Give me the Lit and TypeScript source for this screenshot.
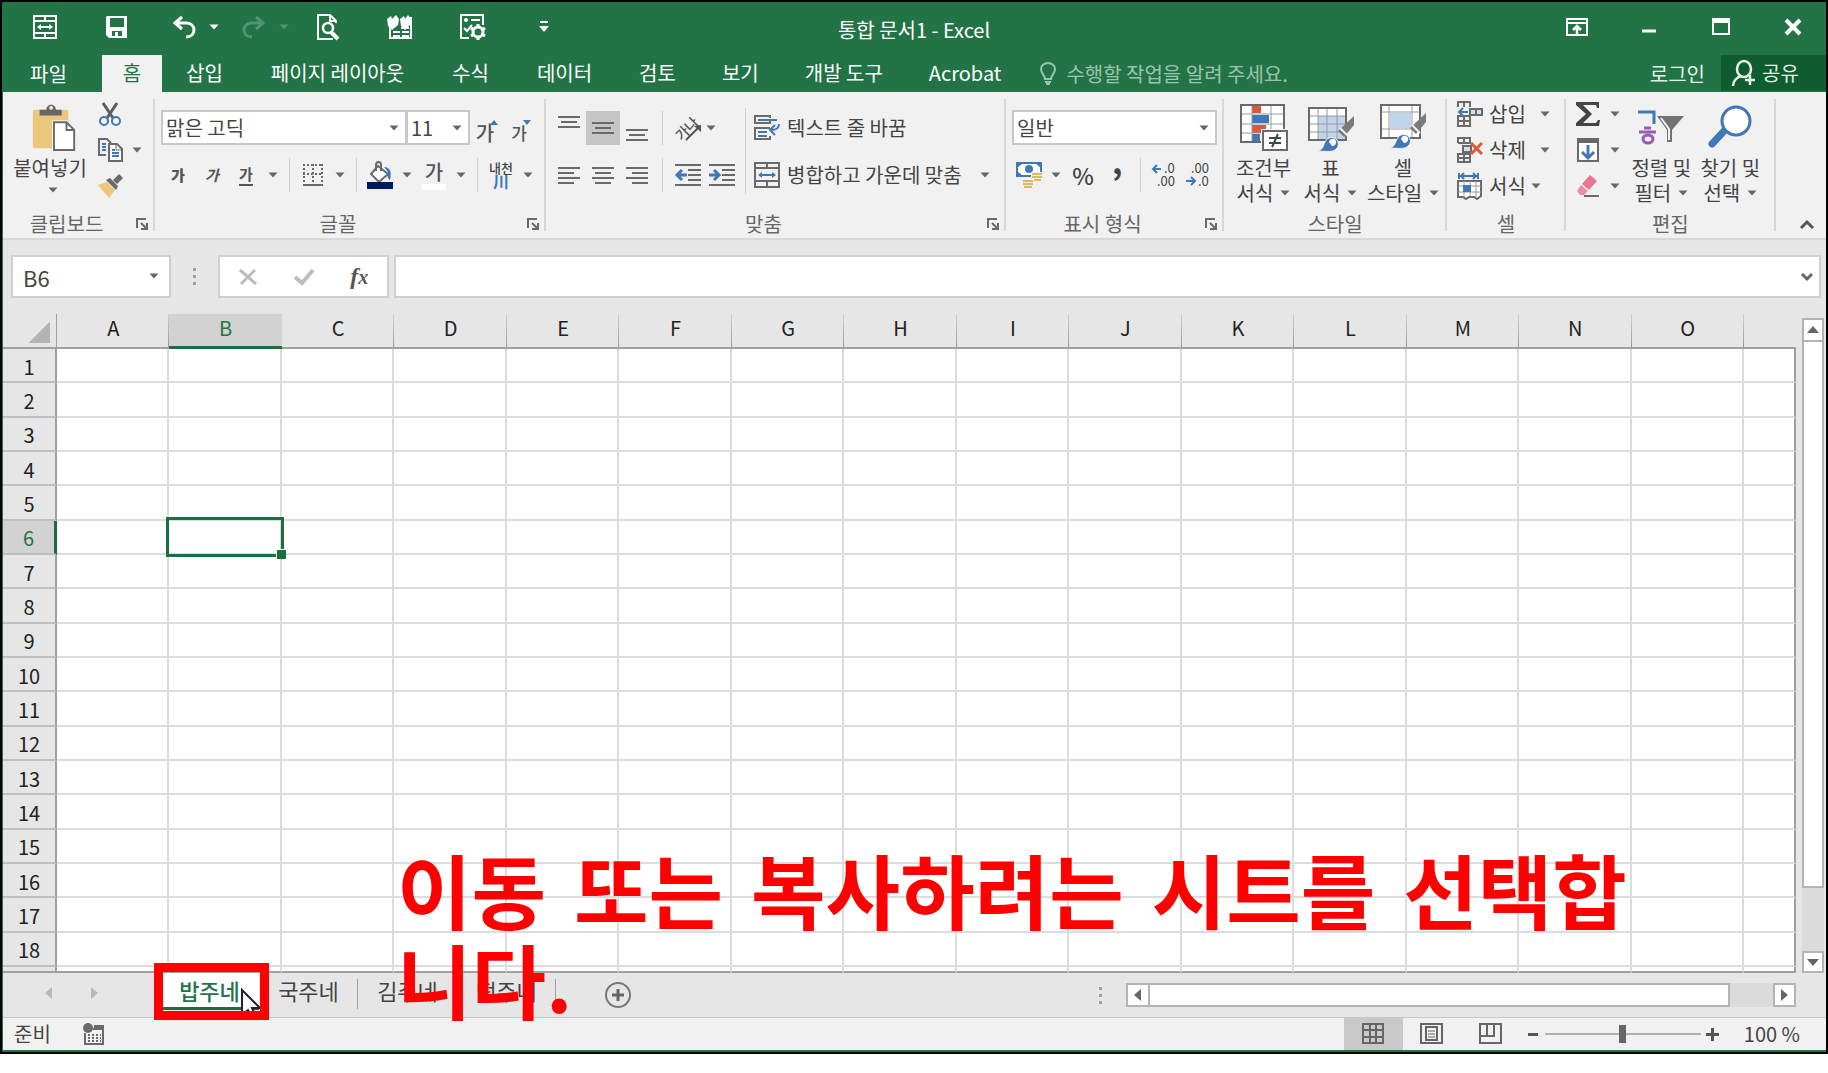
import { LitElement, html, svg, css, type TemplateResult } from "lit";
import { customElement, state } from "lit/decorators.js";
import { classMap } from "lit/directives/class-map.js";

const COLUMNS = "ABCDEFGHIJKLMNO".split("");
const ROWS = Array.from({ length: 18 }, (_, i) => i + 1);
const SHEETS = ["밥주네", "국주네", "김주네", "떡주네"];
const RIBBON_TABS = ["파일", "홈", "삽입", "페이지 레이아웃", "수식", "데이터", "검토", "보기", "개발 도구", "Acrobat"];
const CAPTION = [["이동", "또는", "복사하려는", "시트를", "선택합"], ["니다."]];

/* Wraps drawing content in an svg of the given size. */
const icon = (w: number, h: number, body: unknown) =>
  html`<svg width=${w} height=${h} viewBox="0 0 ${w} ${h}" fill="none" aria-hidden="true">${body}</svg>`;

const G = "#6a6a6a";
const B = "#3f78b5";
const caret = icon(10, 6, svg`<path d="M0.5 0.5h9L5 5.5z" fill="currentColor"/>`);

const brush = svg`
  <path d="M47 12L31 27l6 6L47 21z" fill="#7b7b7b"/>
  <path d="M33 24l8 8" stroke="#f1f1f1" stroke-width="2"/>
  <path d="M10 47c6-1 6-5 8-9 2-5 9-6 12-2 3 4 1 9-4 11-5 1-11 0-16 0z" fill="${B}" stroke="#f1f1f1"/>
  <path d="M22 38c1-4 6-4 7-1 1 3-2 5-4 5" fill="#fff"/>`;

const ICONS: Record<string, TemplateResult> = {
  mergeWhite: icon(24, 26, svg`<g stroke="currentColor" stroke-width="2"><path d="M1 2h22v22H1zM1 7h22M1 19h22M12 2v5M12 19v5"/><path d="M6 13h12"/></g><path d="M8 10v6l-4-3zM16 10v6l4-3z" fill="currentColor"/>`),
  save: icon(22, 22, svg`<path d="M1 0h20v22H3l-3-3V1z" fill="currentColor"/><path d="M4 2h14v9H4zM6 15h10v5H12v-4H9v4H6z" fill="#227447"/>`),
  undo: icon(24, 22, svg`<path d="M10 1L3 7l7 6M3 7h11c5 0 8 3 8 7 0 4-3 7-8 7" stroke="currentColor" stroke-width="3"/>`),
  redo: icon(24, 22, svg`<path d="M14 1l7 6-7 6M21 7H10c-5 0-8 3-8 7 0 4 3 7 8 7" stroke="currentColor" stroke-width="3"/>`),
  preview: icon(24, 28, svg`<path d="M20 10V8l-6-6H2v24h15" stroke="currentColor" stroke-width="2"/><path d="M14 2v6h6" stroke="currentColor" stroke-width="2"/><circle cx="12" cy="15" r="5" stroke="currentColor" stroke-width="2.5"/><path d="M15 19l7 7" stroke="currentColor" stroke-width="4"/>`),
  form: icon(28, 26, svg`<path d="M4 12v12h21V4h-3M7 18h7M16 18h7M7 22h7M16 22h7M15 14h8" stroke="currentColor" stroke-width="2"/><path d="M1 5l4-3 1 3 4-4 3 4-1 6-6 5-4-4zM14 5l4-3 1 3 3-4 3 4-1 6-5 5-4-4z" fill="currentColor"/>`),
  options: icon(27, 27, svg`<path d="M10 25H2V2h22v10" stroke="currentColor" stroke-width="2"/><path d="M12 7h9M5 15l3 3 5-6" stroke="currentColor" stroke-width="2"/><circle cx="7" cy="7" r="2" fill="currentColor"/><circle cx="19" cy="19" r="5" stroke="currentColor" stroke-width="3"/><path d="M19 11v3M19 24v3M12 15l3 2M23 21l3 2M12 23l3-2M23 17l3-2" stroke="currentColor" stroke-width="3"/>`),
  more: icon(10, 12, svg`<path d="M1 1h8" stroke="currentColor" stroke-width="2"/><path d="M0 5h10l-5 6z" fill="currentColor"/>`),
  ribbonOpts: icon(22, 18, svg`<path d="M1 1h20v16H1zM1 5h20" stroke="currentColor" stroke-width="2"/><path d="M11 16V8M7 12l4-4 4 4" stroke="currentColor" stroke-width="2.5"/>`),
  min: icon(16, 16, svg`<path d="M1 12h14" stroke="currentColor" stroke-width="3"/>`),
  max: icon(18, 18, svg`<path d="M1 1h16v15H1z" stroke="currentColor" stroke-width="2"/><path d="M1 1h16v4H1z" fill="currentColor"/>`),
  close: icon(18, 18, svg`<path d="M2 2l14 14M16 2L2 16" stroke="currentColor" stroke-width="4"/>`),
  bulb: icon(16, 24, svg`<path d="M5 17c0-4-4-5-4-10a7 6 0 0 1 14 0c0 5-4 6-4 10z" stroke="currentColor" stroke-width="2"/><path d="M5 20h6M6 22h4" stroke="currentColor" stroke-width="2"/>`),
  share: icon(24, 27, svg`<ellipse cx="12" cy="9" rx="7" ry="8" stroke="currentColor" stroke-width="2.5"/><path d="M1 26c0-5 4-9 8-10M18 15v10M13 20h10" stroke="currentColor" stroke-width="2.5"/>`),
  paste: icon(46, 50, svg`<rect x="1" y="6" width="37" height="40" rx="2" fill="#ecc67d"/><path d="M8 12V6h7c0-7 10-7 10 0h6v6z" fill="#666"/><circle cx="20" cy="4" r="2" fill="#f1f1f1"/><path d="M23 19h13l8 8v21H23z" fill="#fff" stroke="#f1f1f1" stroke-width="4"/><path d="M23 19h13l8 8v21H23zM36 19v8h8" fill="#fff" stroke="${G}" stroke-width="2"/>`),
  cut: icon(24, 25, svg`<path d="M5 1l10 15M19 1L9 16" stroke="#5c5c5c" stroke-width="3"/><circle cx="6" cy="19" r="4" stroke="${B}" stroke-width="2"/><circle cx="18" cy="19" r="4" stroke="${B}" stroke-width="2"/>`),
  copy: icon(25, 24, svg`<path d="M8 17H1V1h8l4 4" stroke="${G}" stroke-width="2"/><path d="M4 6h4M4 9h4M4 12h4" stroke="${B}" stroke-width="2"/><path d="M11 6h8l5 5v12H11z" fill="#fff" stroke="${G}" stroke-width="2"/><path d="M18 6v6h6" stroke="${G}"/><path d="M14 12h3M14 15h7M14 18h7" stroke="${B}" stroke-width="2"/>`),
  painter: icon(26, 24, svg`<path d="M1 11l9-3 8 8-6 8z" fill="#ecc67d"/><path d="M9 6l4-2 8 8-2 4zM16 6l6-6 4 4-6 6z" fill="#6a6a6a"/>`),
  border: icon(22, 24, svg`<path d="M1 2h20M1 11h20M2 1v18M11 1v18M20 1v18" stroke="${G}" stroke-width="2" stroke-dasharray="2 2"/><path d="M1 22h20" stroke="${G}" stroke-width="2"/>`),
  fill: icon(26, 28, svg`<path d="M11 5l10 8-9 8-8-8z" fill="#fff" stroke="${G}" stroke-width="2"/><path d="M9 10V4c0-4 5-4 5 0v6" stroke="${G}" stroke-width="2"/><path d="M17 6c6 0 8 5 6 13-3-2-3-6-2-8z" fill="${B}"/><path d="M0 21h26v7H0z" fill="#001a5e"/>`),
  top: icon(22, 28, svg`<path d="M0 3h22M3 8h16M0 13h22" stroke="${G}" stroke-width="2"/>`),
  middle: icon(22, 28, svg`<path d="M0 9h22M3 14h16M0 19h22" stroke="${G}" stroke-width="2"/>`),
  bottom: icon(22, 28, svg`<path d="M0 16h22M3 21h16M0 26h22" stroke="${G}" stroke-width="2"/>`),
  left: icon(22, 18, svg`<path d="M0 2h22M0 7h16M0 12h22M0 17h16" stroke="${G}" stroke-width="2"/>`),
  center: icon(22, 18, svg`<path d="M0 2h22M3 7h16M0 12h22M3 17h16" stroke="${G}" stroke-width="2"/>`),
  right: icon(22, 18, svg`<path d="M0 2h22M6 7h16M0 12h22M6 17h16" stroke="${G}" stroke-width="2"/>`),
  orient: icon(28, 28, svg`<text x="-10" y="5" transform="translate(11 17) rotate(-45)" font-size="14" font-weight="500" fill="#555" font-family="Noto Sans CJK KR, sans-serif">가나</text><path d="M12 26L25 13" stroke="#555" stroke-width="2"/><path d="M27 11v7l-7-6z" fill="#555"/>`),
  outdent: icon(26, 22, svg`<path d="M0 1h26M13 6h13M13 11h13M13 16h13M0 21h26" stroke="${G}" stroke-width="2"/><path d="M12 11H3M7 6l-5 5 5 5" stroke="${B}" stroke-width="3"/>`),
  indent: icon(26, 22, svg`<path d="M0 1h26M13 6h13M13 11h13M13 16h13M0 21h26" stroke="${G}" stroke-width="2"/><path d="M0 11h9M5 6l5 5-5 5" stroke="${B}" stroke-width="3"/>`),
  wrap: icon(26, 26, svg`<path d="M16 3V1H1v7h15V6M16 13H1v11h15v-3" stroke="${G}" stroke-width="2"/><path d="M4 5h19M4 17h9M4 21h9M25 9c0 5-3 6-8 6M21 10l-5 5 5 5" stroke="${B}" stroke-width="2"/>`),
  merge: icon(26, 26, svg`<path d="M1 1h24v24H1zM1 6h24M1 19h24M13 1v5M13 19v6" stroke="${G}" stroke-width="2"/><path d="M6 13h14" stroke="${B}" stroke-width="2"/><path d="M8 10v6l-4-3zM18 10v6l4-3z" fill="${B}"/>`),
  money: icon(26, 26, svg`<rect x="1" y="1" width="24" height="13" fill="#fff" stroke="${B}" stroke-width="2"/><path d="M1 1h6l-6 5zM25 1h-6l6 5zM1 14h6l-6-5z" fill="${B}"/><circle cx="13" cy="7" r="4" fill="${B}"/><path d="M15 10h11v9H15zM6 17h12v9H6z" fill="#f1f1f1"/><path d="M16 12h10M16 15h10M18 18h7M7 19h10M7 22h10M8 25h8" stroke="#e5b566" stroke-width="2"/>`),
  decInc: icon(26, 28, svg`<path d="M10 8H2M6 4L2 8l4 4" stroke="${B}" stroke-width="2"/><g font-family="Noto Sans CJK KR, sans-serif" font-size="13" fill="#444"><text x="13" y="12">.0</text><text x="6" y="25">.00</text></g>`),
  decDec: icon(26, 28, svg`<path d="M1 20h9M6 16l4 4-4 4" stroke="${B}" stroke-width="2"/><g font-family="Noto Sans CJK KR, sans-serif" font-size="13" fill="#444"><text x="6" y="12">.00</text><text x="13" y="25">.0</text></g>`),
  cond: icon(48, 48, svg`<path d="M1 1h43v37H1z" fill="#fff"/><path d="M12 1h9v8h-9zM12 21h14v8H12z" fill="#dc5a38"/><path d="M12 11h17v8H12zM12 30h8v8h-8z" fill="${B}"/><path d="M1 10h43M1 20h43M1 29h43M12 1v37M31 1v37" stroke="#9a9a9a"/><path d="M1 1h43v37H1z" stroke="${G}" stroke-width="2"/><path d="M21 25h27v23H21z" fill="#f1f1f1"/><path d="M23 27h24v19H23z" fill="#fff" stroke="${G}" stroke-width="2"/><path d="M29 34h12M29 39h12M38 30l-6 13" stroke="#444" stroke-width="2"/>`),
  tableStyle: icon(48, 48, svg`<path d="M2 4h37v32H2z" fill="#fff"/><path d="M11 12h28v24H11z" fill="#c0d4ec"/><path d="M2 12h37M2 20h37M2 28h37M11 4v32M20 4v32M30 4v32" stroke="#9a9a9a"/><path d="M2 4h37v32H2z" stroke="${G}" stroke-width="2"/>${brush}`),
  cellStyle: icon(48, 48, svg`<path d="M2 1h39v33H2z" fill="#fff"/><path d="M10 1v33M33 1v33M2 8h39M2 25h39" stroke="#9a9a9a"/><path d="M11 9h21v15H11z" fill="#c0d4ec"/><path d="M2 1h39v33H2z" stroke="${G}" stroke-width="2"/><g transform="translate(0 -3)">${brush}</g>`),
  insert: icon(26, 26, svg`<path d="M1 6V1h12v5M7 1v5M1 15h12v10H1zM7 15v10M1 20h12" stroke="${G}" stroke-width="2"/><path d="M13 8h12v6H13zM19 8v6" fill="#cfe0f2" stroke="${G}" stroke-width="2"/><path d="M11 11H2M6 7l-4 4 4 4" stroke="${B}" stroke-width="2"/>`),
  remove: icon(26, 26, svg`<path d="M1 6V1h12v5H1M7 1v5M1 17h12v8H1zM7 17v8M1 21h12" stroke="${G}" stroke-width="2"/><path d="M6 9h8v6H6z" fill="#cfe0f2" stroke="${G}" stroke-width="2"/><path d="M14 6l11 11M25 6L14 17" stroke="#dc5a38" stroke-width="3"/>`),
  format: icon(26, 27, svg`<path d="M2 0v6M21 0v6M3 3h17M7 0L4 3l3 3M16 0l3 3-3 3" stroke="${B}" stroke-width="2"/><path d="M1 8h23v15l-4 3-3-2h-5l-3 2-3-2H1z" fill="#fff" stroke="${G}" stroke-width="2"/><path d="M1 13h23M1 19h23M7 8v16M13 8v16M19 8v16" stroke="#999"/><path d="M6 12h8v7H6z" fill="${B}"/>`),
  sum: icon(26, 26, svg`<path d="M1 1h23v6h-2l-1-3H8l9 9-9 9h13l2-3h2l-1 6H1v-3l10-9L1 4z" fill="#444"/>`),
  fillDown: icon(24, 26, svg`<path d="M2 2h20v22H2z" fill="#fff" stroke="${G}" stroke-width="2"/><path d="M1 1h22v5H1z" fill="#666"/><path d="M12 8v12M6 15l6 6 6-6" stroke="${B}" stroke-width="3"/>`),
  eraser: icon(24, 24, svg`<path d="M14 1l7 6-8 9-7-6z" fill="#e8788d"/><path d="M5 11l7 6-4 4H4l-3-4z" fill="#eb8fa0"/><path d="M8 22h15" stroke="${G}" stroke-width="2"/>`),
  sort: icon(48, 48, svg`<path d="M1 8h16v12" stroke="${B}" stroke-width="3"/><path d="M2 28h17M7 24h7" stroke="#9b59b6" stroke-width="3"/><ellipse cx="11" cy="35" rx="5" ry="4" stroke="#9b59b6" stroke-width="3"/><path d="M20 12h27L35 26v12h-5V26z" fill="#737373"/><path d="M24 14l8 11v11" stroke="#f1f1f1" stroke-width="2"/>`),
  find: icon(46, 46, svg`<path d="M18 25L5 39" stroke="${B}" stroke-width="7" stroke-linecap="round"/><ellipse cx="29" cy="16" rx="14" ry="14" fill="#fff" stroke="${B}" stroke-width="3"/>`),
  launcher: icon(12, 12, svg`<path d="M1 10V1h9" stroke="${G}" stroke-width="2"/><path d="M5 5l6 6M11 5v6H5" stroke="${G}" stroke-width="2"/>`),
  collapse: icon(14, 10, svg`<path d="M1 8l6-6 6 6" stroke="#555" stroke-width="3"/>`),
  expand: icon(14, 10, svg`<path d="M2 2l5 5 5-5" stroke="#666" stroke-width="3"/>`),
  cancel: icon(18, 18, svg`<path d="M1 2l16 14M16 2L2 16" stroke="#bdbdbd" stroke-width="3"/>`),
  enter: icon(20, 18, svg`<path d="M1 9l7 6L19 2" stroke="#bdbdbd" stroke-width="4"/>`),
  prev: icon(8, 12, svg`<path d="M7 0v12L0 6z" fill="currentColor"/>`),
  next: icon(8, 12, svg`<path d="M1 0v12l7-6z" fill="currentColor"/>`),
  up: icon(12, 8, svg`<path d="M0 7h12L6 0z" fill="currentColor"/>`),
  down: icon(12, 8, svg`<path d="M0 1h12L6 8z" fill="currentColor"/>`),
  add: icon(28, 28, svg`<circle cx="14" cy="14" r="12" stroke="#777" stroke-width="2"/><path d="M14 8v12M8 14h12" stroke="#666" stroke-width="3"/>`),
  macro: icon(22, 22, svg`<path d="M2 10v11h18V6H10" stroke="${G}" stroke-width="2"/><path d="M11 2h10v5H11z" fill="${G}"/><circle cx="5" cy="5" r="5" fill="${G}"/><path d="M5 12h13M5 15h13M5 18h13" stroke="${G}" stroke-width="2" stroke-dasharray="2 2"/>`),
  normal: icon(22, 22, svg`<path d="M1 1h20v19H1zM1 7h20M1 14h20M8 1v19M14 1v19" stroke="#666" stroke-width="2"/>`),
  pageLayout: icon(24, 22, svg`<path d="M1 1h21v19H1zM6 4h11v13H6z" stroke="#666" stroke-width="2"/><path d="M8 8h7M8 11h7M8 14h7" stroke="#666"/>`),
  pageBreak: icon(24, 22, svg`<path d="M1 1h21v19H1zM1 13h14V1M8 1v12" stroke="#666" stroke-width="2"/>`),
  pointer: icon(22, 32, svg`<path d="M1 1v25l6-5 4 9 4-2-4-9h8z" fill="#fff" stroke="#223" stroke-width="2"/>`),
};

@customElement("app-root")
export class AppRoot extends LitElement {
  @state() private activeSheet = 0;
  @state() private activeTab = 1;

  private tool(name: string, label: string, extra = "") {
    return html`<button class="tool ${extra}" aria-label=${label}>${ICONS[name]}</button>`;
  }

  private drop(label: string, extra = "") {
    return html`<button class="drop ${extra}" aria-label=${label}>${caret}</button>`;
  }

  private groupFoot(label: string, launcher = false) {
    return html`<div class="foot">
      <span class="foot-label">${label}</span>
      ${launcher ? html`<button class="launcher" aria-label="${label} 설정">${ICONS.launcher}</button>` : ""}
    </div>`;
  }

  private big(name: string, first: string, second: string, size: string) {
    return html`<button class="big ${size}">
      ${ICONS[name]}
      <span>${first}</span>
      <span class="big-line">${second}${caret}</span>
    </button>`;
  }

  private combo(label: string, value: string, size: string) {
    return html`<div class="combo ${size}">
      <select aria-label=${label}><option>${value}</option></select>
      <span class="combo-caret">${caret}</span>
    </div>`;
  }

  private renderTitle() {
    return html`<header class="title">
      <div class="quick">
        ${this.tool("mergeWhite", "병합", "q")} ${this.tool("save", "저장", "q")}
        <div class="history">
          <div class="split">${this.tool("undo", "실행 취소", "q")}${this.drop("실행 취소 목록", "narrow")}</div>
          <div class="split faded">${this.tool("redo", "다시 실행", "q")}${this.drop("다시 실행 목록", "narrow")}</div>
        </div>
        ${this.tool("preview", "인쇄 미리 보기", "q")} ${this.tool("form", "레코드 관리", "q")}
        ${this.tool("options", "옵션", "q")} ${this.tool("more", "빠른 실행 도구 모음 사용자 지정", "q")}
      </div>
      <h1>통합 문서1 - Excel</h1>
      <div class="controls">
        ${this.tool("ribbonOpts", "리본 메뉴 표시 옵션", "q")} ${this.tool("min", "최소화", "q")}
        ${this.tool("max", "최대화", "q")} ${this.tool("close", "닫기", "q")}
      </div>
    </header>`;
  }

  private renderTabs() {
    return html`<nav class="tabs">
      ${RIBBON_TABS.map(
        (t, i) => html`<button
          class=${classMap({ tab: true, file: i === 0, home: i === 1, late: i > 5, on: i === this.activeTab })}
          @click=${() => (this.activeTab = i)}>${t}</button>`,
      )}
      <label class="tell">${ICONS.bulb}<input aria-label="작업 검색" placeholder="수행할 작업을 알려 주세요." /></label>
      <button class="login">로그인</button>
      <button class="share">${ICONS.share}<span>공유</span></button>
    </nav>`;
  }

  private renderRibbon() {
    return html`<div class="ribbon">
      <section class="group">
        <div class="body">
          <button class="big paste">${ICONS.paste}<span>붙여넣기</span><span class="paste-caret">${caret}</span></button>
          <div class="stack">
            <div class="line">${this.tool("cut", "잘라내기")}</div>
            <div class="line">${this.tool("copy", "복사")}${this.drop("복사 옵션")}</div>
            <div class="line">${this.tool("painter", "서식 복사")}</div>
          </div>
        </div>
        ${this.groupFoot("클립보드", true)}
      </section>
      <section class="group">
        <div class="rows fonts">
          <div class="row">
            ${this.combo("글꼴", "맑은 고딕", "font")}${this.combo("글꼴 크기", "11", "size")}
            <button class="tool ga grow" aria-label="글꼴 크기 크게"><span>가</span><i class="tri up"></i></button>
            <button class="tool ga shrink" aria-label="글꼴 크기 작게"><span>가</span><i class="tri dn"></i></button>
          </div>
          <div class="row">
            <button class="tool ga bold">가</button>
            <button class="tool ga italic">가</button>
            <button class="tool ga under"><span>가</span></button>
            ${this.drop("밑줄 옵션")}
            <span class="bar"></span>${this.tool("border", "테두리")}${this.drop("테두리 옵션")}
            <span class="bar"></span>${this.tool("fill", "채우기 색")}${this.drop("채우기 색 옵션")}
            <button class="tool ga color"><span>가</span></button>${this.drop("글꼴 색 옵션")}
            <span class="bar"></span>
            <button class="tool ruby"><span>내천</span><b>川</b></button>${this.drop("윗주 옵션")}
          </div>
        </div>
        ${this.groupFoot("글꼴", true)}
      </section>
      <section class="group">
        <div class="body">
          <div class="rows">
            <div class="row">
              ${this.tool("top", "위쪽 맞춤")}${this.tool("middle", "가운데 맞춤", "pressed")}${this.tool("bottom", "아래쪽 맞춤")}
              <span class="bar wide"></span>${this.tool("orient", "방향")}${this.drop("방향 옵션", "slim")}
            </div>
            <div class="row">
              ${this.tool("left", "왼쪽 맞춤")}${this.tool("center", "가로 가운데 맞춤")}${this.tool("right", "오른쪽 맞춤")}
              <span class="bar wide"></span>${this.tool("outdent", "내어쓰기")}${this.tool("indent", "들여쓰기")}
            </div>
          </div>
          <span class="bar tall"></span>
          <div class="rows text-rows">
            <div class="row"><button class="labelled">${ICONS.wrap}<span>텍스트 줄 바꿈</span></button></div>
            <div class="row between">
              <button class="labelled">${ICONS.merge}<span>병합하고 가운데 맞춤</span></button>${this.drop("병합 옵션")}
            </div>
          </div>
        </div>
        ${this.groupFoot("맞춤", true)}
      </section>
      <section class="group">
        <div class="rows">
          <div class="row">${this.combo("표시 형식", "일반", "number")}</div>
          <div class="row">
            ${this.tool("money", "회계 표시 형식")}${this.drop("회계 옵션")}
            <button class="tool percent">%</button>
            <button class="tool comma" aria-label="쉼표 스타일">’</button>
            <span class="bar"></span>${this.tool("decInc", "자릿수 늘림")}${this.tool("decDec", "자릿수 줄임")}
          </div>
        </div>
        ${this.groupFoot("표시 형식", true)}
      </section>
      <section class="group">
        <div class="body styles">
          ${this.big("cond", "조건부", "서식", "m")}${this.big("tableStyle", "표", "서식", "s")}${this.big("cellStyle", "셀", "스타일", "l")}
        </div>
        ${this.groupFoot("스타일")}
      </section>
      <section class="group">
        <div class="stack cells">
          <div class="line">${this.tool("insert", "삽입")}<span class="name">삽입</span>${this.drop("삽입 옵션", "apart")}</div>
          <div class="line">${this.tool("remove", "삭제")}<span class="name">삭제</span>${this.drop("삭제 옵션", "apart")}</div>
          <div class="line">${this.tool("format", "서식")}<span class="name">서식</span>${this.drop("서식 옵션")}</div>
        </div>
        ${this.groupFoot("셀")}
      </section>
      <section class="group">
        <div class="body edits">
          <div class="stack">
            <div class="line">${this.tool("sum", "자동 합계")}${this.drop("합계 옵션")}</div>
            <div class="line">${this.tool("fillDown", "채우기")}${this.drop("채우기 옵션")}</div>
            <div class="line">${this.tool("eraser", "지우기")}${this.drop("지우기 옵션")}</div>
          </div>
          ${this.big("sort", "정렬 및", "필터", "m")}${this.big("find", "찾기 및", "선택", "m")}
        </div>
        ${this.groupFoot("편집")}
      </section>
      <button class="collapse" aria-label="리본 메뉴 축소">${ICONS.collapse}</button>
    </div>`;
  }

  private renderFormula() {
    return html`<div class="formula">
      <div class="box namebox"><input aria-label="이름 상자" .value=${"B6"} />${this.drop("이름 목록", "name-drop")}</div>
      <span class="dots"></span>
      <div class="box entry">
        <button aria-label="취소">${ICONS.cancel}</button>
        <button aria-label="입력">${ICONS.enter}</button>
        <button class="fx" aria-label="함수 삽입">f<sub>x</sub></button>
      </div>
      <div class="box line-input"><input aria-label="수식 입력줄" /><button aria-label="수식 입력줄 확장">${ICONS.expand}</button></div>
    </div>`;
  }

  private renderSheet() {
    return html`<div class="sheet">
      <table>
        <thead>
          <tr>
            <th class="corner" aria-label="모두 선택"></th>
            ${COLUMNS.map((c) => html`<th scope="col" class=${classMap({ col: true, sel: c === "B" })}>${c}</th>`)}
            <th class="col last"></th>
          </tr>
        </thead>
        <tbody>
          ${ROWS.map(
            (r) => html`<tr>
              <th scope="row" class=${classMap({ rowh: true, sel: r === 6 })}>${r}</th>
              ${COLUMNS.map((c) => html`<td>${r === 6 && c === "B" ? html`<span class="cursor-cell"></span>` : ""}</td>`)}
              <td class="last"></td>
            </tr>`,
          )}
          <tr class="cut">
            <th class="rowh"></th>
            ${COLUMNS.map(() => html`<td></td>`)}
            <td class="last"></td>
          </tr>
        </tbody>
      </table>
      <div class="vscroll">
        <button aria-label="위로">${ICONS.up}</button>
        <div class="vthumb"></div>
        <div class="vtrack"></div>
        <button aria-label="아래로">${ICONS.down}</button>
      </div>
    </div>`;
  }

  private renderSheetTabs() {
    return html`<div class="sheetbar">
      <div class="sheetnav">
        <button aria-label="이전 시트">${ICONS.prev}</button><button aria-label="다음 시트">${ICONS.next}</button>
      </div>
      ${SHEETS.map(
        (s, i) => html`<button
          class=${classMap({ sheettab: true, current: i === this.activeSheet })}
          @click=${() => (this.activeSheet = i)}>
          ${s}
          ${i === 0 ? html`<span class="pointer">${ICONS.pointer}</span><span class="highlight"></span>` : ""}
        </button>`,
      )}
      <button class="add" aria-label="새 시트">${ICONS.add}</button>
      <span class="dots"></span>
      <div class="hscroll">
        <button aria-label="왼쪽으로">${ICONS.prev}</button>
        <div class="hthumb"></div>
        <div class="htrack"></div>
        <button aria-label="오른쪽으로">${ICONS.next}</button>
      </div>
    </div>`;
  }

  private renderStatus() {
    return html`<footer class="status">
      <span class="ready">준비</span>${ICONS.macro}
      <div class="views">
        <button class="on" aria-label="기본">${ICONS.normal}</button>
        <button aria-label="페이지 레이아웃">${ICONS.pageLayout}</button>
        <button aria-label="페이지 나누기 미리 보기">${ICONS.pageBreak}</button>
      </div>
      <button class="zoom minus" aria-label="축소"></button>
      <input class="slider" type="range" min="0" max="100" value="50" aria-label="확대/축소" />
      <button class="zoom plus" aria-label="확대"></button>
      <span class="percent-text">100 %</span>
    </footer>`;
  }

  render() {
    return html`<main class="window">
      ${this.renderTitle()} ${this.renderTabs()} ${this.renderRibbon()} ${this.renderFormula()}
      ${this.renderSheet()} ${this.renderSheetTabs()} ${this.renderStatus()}
      <p class="caption">
        ${CAPTION.map((line) => html`<span class="caption-line">${line.map((w) => html`<span>${w}</span> `)}</span>`)}
      </p>
    </main>`;
  }

  static styles = css`
    :host { display: block; background: #fff; color: #444; font: 20px/24px "Noto Sans CJK KR", sans-serif; min-height: 100vh; }
    * { box-sizing: border-box; }
    button, input, select { font: inherit; color: inherit; background: none; border: 0; padding: 0; margin: 0; border-radius: 0; outline: none; }
    button { display: flex; align-items: center; justify-content: center; white-space: nowrap; flex: none; }
    svg { display: block; flex: none; overflow: visible; }
    .window { position: relative; display: flex; flex-direction: column; min-height: calc(100vh - 19px); border: 2px solid #000; background: #e6e6e6; box-shadow: inset 1px 0 #227447; overflow: hidden; }

    .title { display: grid; grid-template-columns: 1fr auto 1fr; height: 53px; background: #227447; color: #fff; }
    .quick { display: flex; align-items: center; gap: 28px; padding: 0 0 4px 21px; }
    .history { display: flex; gap: 10px; margin: 0 -14px 0 -5px; }
    .split { display: flex; align-items: center; }
    .faded { color: #569373; }
    h1 { margin: 0; padding-top: 4px; font-size: 20px; font-weight: 400; line-height: 48px; }
    .controls { display: flex; justify-content: flex-end; align-items: center; gap: 28px; padding: 0 11px 4px 0; }
    .tool { width: 34px; height: 34px; }
    .tool.q { width: 44px; }
    .drop { width: 20px; height: 34px; color: #666; }
    .drop.narrow { width: 16px; color: inherit; }
    .drop.slim { width: 12px; }
    .drop.apart { margin-left: 9px; }

    .tabs { display: flex; height: 37px; background: #227447; color: #fff; }
    .tab { padding: 0 24px 1px; }
    .tab.file { width: 100px; padding: 0 7px 0 0; }
    .tab.home { width: 60px; padding: 0 0 1px; }
    .tab.late { padding: 0 23px 1px; }
    .tab.on { background: #f1f1f1; color: #227447; }
    .tell { display: flex; align-items: center; gap: 10px; margin-left: 16px; color: #9cc4ad; flex: 1; }
    .tell input { width: 260px; }
    .tell input::placeholder { color: #9cc4ad; opacity: 1; }
    .login { padding: 0 16px; color: #e4efe8; }
    .share { gap: 6px; width: 105px; padding-right: 16px; background: #0f5c2e; color: #e4efe8; height: 36px; }

    .ribbon { display: flex; height: 148px; background: #f1f1f1; border-bottom: 2px solid #d8d8d8; margin-left: 1px; }
    .group { display: grid; grid-template: 1fr 28px / auto 1px; background: linear-gradient(#d8d8d8, #d8d8d8) right 7px / 2px 132px no-repeat; }
    .body { display: flex; }
    .foot { display: flex; grid-row: 2; grid-column: 1; color: #666; }
    .foot-label { flex: 1; text-align: center; line-height: 28px; }
    .launcher { width: 24px; }
    .stack { padding-top: 4px; }
    .line { display: flex; align-items: center; height: 36px; }
    .name { padding-left: 2px; }
    .rows { display: flex; flex-direction: column; gap: 12px; padding: 18px 6px 0; }
    .fonts { padding-right: 7px; }
    .row { display: flex; height: 35px; align-items: center; }
    .text-rows { padding: 18px 10px 0 8px; width: 259px; }
    .between { justify-content: space-between; }
    .labelled { gap: 7px; }
    .bar { width: 1px; height: 34px; margin: 0 6px; background: #d0d0d0; flex: none; }
    .bar.wide { margin: 0 8px; }
    .bar.tall { height: 86px; margin: 16px 0 0; }
    .pressed { background: #c6c6c6; }
    .combo { position: relative; height: 35px; background: #fff; border: 2px solid #c8c8c8; display: grid; }
    .combo select { appearance: none; padding-left: 3px; }
    .combo-caret { position: absolute; right: 6px; top: 13px; color: #666; pointer-events: none; }
    .combo.font { width: 246px; }
    .combo.size { width: 63px; border-left-width: 1px; }
    .combo.number { width: 205px; }
    .styles { padding: 0 3px 0 5px; }
    .cells { padding: 4px 10px 0 6px; }
    .edits { padding: 0 10px 0 5px; }
    .edits .stack { padding-right: 2px; }
    .big { flex-direction: column; justify-content: flex-start; padding-top: 12px; line-height: 25px; }
    .big > svg { margin-bottom: 3px; height: 48px; }
    .big.m { width: 69px; }
    .big.s { width: 65px; }
    .big.l { width: 80px; }
    .big-line { display: flex; align-items: center; gap: 7px; }
    .big-line svg { color: #666; }
    .paste { width: 90px; padding-left: 4px; }
    .paste > svg { margin-left: 7px; }
    .paste-caret { color: #666; padding: 7px 0 0 6px; }
    .paste + .stack { width: 61px; }
    .ga { font-weight: 500; color: #555; }
    .ga.bold { font-size: 15px; font-weight: 900; }
    .ga.italic { font-size: 15px; font-weight: 700; font-style: italic; }
    .ga.under { font-size: 15px; font-weight: 700; }
    .ga.under span { border-bottom: 2px solid #555; line-height: 20px; }
    .ga.color span { border-bottom: 6px solid #fff; line-height: 24px; padding: 0 3px; }
    .grow, .shrink { align-items: flex-end; }
    .shrink { font-size: 17px; }
    .tri { width: 0; height: 0; border: 4px solid transparent; margin: 0 0 20px -4px; }
    .tri.up { border-bottom: 5px solid #3f78b5; border-top: 0; }
    .tri.dn { border-top: 5px solid #3f78b5; border-bottom: 0; }
    .ruby { flex-direction: column; font-size: 13px; font-weight: 500; line-height: 13px; align-items: center; }
    .ruby b { color: #3f78b5; font-size: 16px; line-height: 15px; }
    .percent { font-size: 23px; font-weight: 500; }
    .comma { font-size: 32px; font-weight: 900; line-height: 44px; align-items: flex-start; }
    .collapse { margin-left: auto; width: 38px; align-items: flex-end; padding-bottom: 8px; }

    .formula { display: flex; align-items: center; height: 74px; padding: 0 5px 1px 9px; }
    .box { display: flex; height: 43px; background: #fff; border: 2px solid #cfcfcf; font-size: 22px; }
    .namebox { width: 160px; padding-left: 10px; }
    .namebox input { width: 100%; min-width: 0; }
    .name-drop { width: 30px; height: 38px; }
    .dots { width: 3px; height: 17px; margin: 0 22px; background: repeating-linear-gradient(#a0a0a0 0 3px, transparent 3px 7px); }
    .entry { width: 171px; }
    .entry button { flex: 1; }
    .fx { font: italic 700 24px "Liberation Serif", serif; color: #555; }
    .fx sub { font-size: 20px; line-height: 20px; }
    .line-input { flex: 1; margin-left: 5px; }
    .line-input input { flex: 1; min-width: 0; }
    .line-input button { width: 24px; }

    .sheet { flex: 1; display: grid; grid-template-columns: 1fr 22px; gap: 6px; padding-right: 2px; }
    table { display: grid; grid-template-columns: 54px repeat(15, minmax(0, 1fr)) 52px; grid-template-rows: 35px repeat(18, minmax(24px, 1fr)) 6px; margin-left: 1px; color: #222; }
    thead, tbody, tr { display: contents; }
    th { font-weight: 400; display: flex; align-items: center; justify-content: center; padding: 0; min-width: 0; min-height: 0; }
    td { background: #fff; border-right: 2px solid #dcdcdc; border-bottom: 2px solid #dcdcdc; padding: 0; position: relative; min-width: 0; min-height: 0; }
    .corner { background: linear-gradient(135deg, transparent 50%, #b4b4b4 50%) 26px 8px / 21px 21px no-repeat; border-right: 1px solid #a0a0a0; border-bottom: 2px solid #a0a0a0; }
    .col { border-bottom: 2px solid #a0a0a0; padding-bottom: 6px; background: linear-gradient(#d0d0d0, #999) right / 1px 100% no-repeat; }
    .last { border-right-color: #a0a0a0; }
    .col.last { background: none; }
    .col.sel { background: #d2d2d2; color: #227447; border-bottom: 3px solid #187040; padding-bottom: 5px; }
    .rowh { border-right: 2px solid #a0a0a0; border-bottom: 2px solid #bfbfbf; padding-top: 3px; }
    .rowh.sel { background: #d2d2d2; color: #227447; border-right: 3px solid #187040; }
    .cut td, .cut th { border-bottom-color: #a0a0a0; }
    .cut .rowh { padding: 0; }
    .cursor-cell { position: absolute; inset: -4px -4px -4px -3px; border: 3px solid #187040; z-index: 1; }
    .cursor-cell::after { content: ""; position: absolute; right: -5px; bottom: -5px; width: 9px; height: 9px; background: #187040; border: solid #fff; border-width: 1px 0 0 1px; }
    .vscroll { display: grid; grid-template-rows: 24px 548fr 63fr 22px; padding-top: 4px; color: #666; }
    .vscroll button, .vthumb, .hscroll button, .hthumb { background: #fff; border: 2px solid #b4b4b4; }
    .vthumb { margin-top: -2px; }
    .vtrack, .htrack { background: #dbdbdb; }

    .sheetbar { display: flex; align-items: center; height: 44px; padding-right: 30px; }
    .sheetnav { display: flex; width: 158px; padding: 0 0 4px 24px; color: #b8b8b8; }
    .sheetnav button { width: 45px; }
    .sheettab { position: relative; width: 99px; height: 37px; padding-bottom: 3px; align-self: flex-start; font-size: 22px; background: linear-gradient(#a0a0a0, #a0a0a0) right 6px / 1px 30px no-repeat; }
    .sheettab.current { background: #fff; color: #227447; border-bottom: 3px solid #187040; padding-bottom: 0; font-weight: 500; }
    .pointer { position: absolute; left: 81px; top: 16px; }
    .highlight { position: absolute; inset: -10px -10px -13px -6px; border: 9px solid #f00; z-index: 1; }
    .add { width: 28px; margin: 0 auto 0 48px; }
    .hscroll { display: grid; grid-template-columns: 24px 580fr 43fr 23px; width: calc(38% - 12px); height: 24px; color: #666; }
    .sheetbar .dots { margin: 0 24px 0 0; }
    .hthumb { margin-left: -2px; }

    .status { display: flex; align-items: center; height: 35px; margin-left: 1px; padding-right: 26px; background: #f1f1f1; border-top: 1px solid #c6c6c6; border-bottom: 2px solid #227447; }
    .ready { padding: 0 32px 0 11px; }
    .views { display: flex; align-self: stretch; margin-left: auto; }
    .views button { width: 59px; }
    .views .on { background: #c9c9c9; }
    .zoom { width: 24px; height: 24px; }
    .minus { background: linear-gradient(#555, #555) center / 10px 3px no-repeat; }
    .plus { background: linear-gradient(#555, #555) center / 13px 3px no-repeat, linear-gradient(#555, #555) center / 3px 13px no-repeat; }
    .slider { appearance: none; width: 156px; height: 20px; background: linear-gradient(#b0b0b0, #b0b0b0) center / 100% 2px no-repeat; }
    .slider::-webkit-slider-thumb { appearance: none; width: 7px; height: 18px; background: #666; }
    .percent-text { padding-left: 19px; }

    .caption { position: absolute; left: 395px; bottom: 29px; margin: 0; color: #f00; font-size: 81px; font-weight: 700; line-height: 90px; white-space: nowrap; z-index: 2; pointer-events: none; }
    .caption-line { display: flex; gap: 28px; }
  `;
}
